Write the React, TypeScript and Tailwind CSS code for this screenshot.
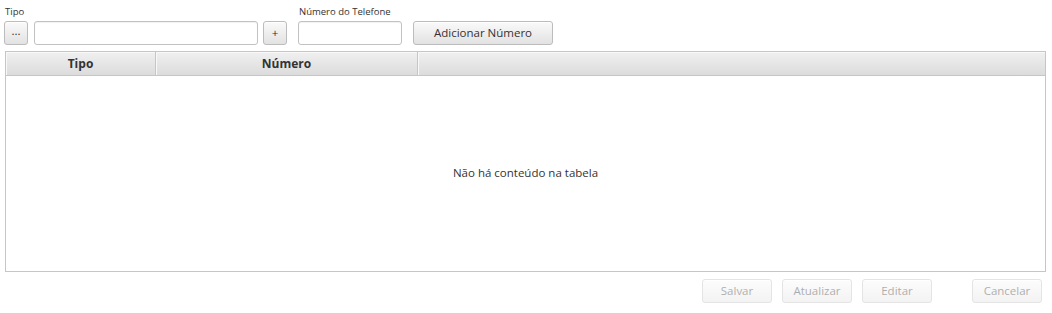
const font = { fontFamily: '"Open Sans", "Noto Sans", sans-serif' };

function Btn({ label, className = "", disabled = false }: { label: string; className?: string; disabled?: boolean }) {
  return (
    <button
      className={`h-[24px] rounded-[3px] border border-[#bcbcbc] bg-gradient-to-b from-[#fafafa] to-[#e2e2e2] text-[11.5px] text-[#333] leading-none shadow-[inset_0_1px_0_#fff] ${disabled ? "opacity-40" : ""} ${className}`}
    >
      {label}
    </button>
  );
}

function Field({ className = "" }: { className?: string }) {
  return <div className={`h-[24px] rounded-[3px] border border-[#c2c2c2] bg-white shadow-[inset_0_1px_1px_rgba(0,0,0,0.06)] ${className}`} />;
}

export default function App() {
  return (
    <div className="w-[1052px] h-[313px] bg-white text-[#333]" style={font}>
      {/* Form row */}
      <div className="flex items-end pl-[4px] pt-[5px]">
        <div className="flex flex-col">
          <span className="pl-[1px] text-[9.5px] leading-[13px] h-[16px]">Tipo</span>
          <div className="flex">
            <Btn label="..." className="w-[24px] pb-[4px]" />
            <Field className="ml-[6px] w-[224px]" />
            <Btn label="+" className="ml-[5px] w-[24px]" />
          </div>
        </div>
        <div className="ml-[11px] flex flex-col">
          <span className="pl-[1px] text-[9.5px] leading-[13px] h-[16px]">Número do Telefone</span>
          <Field className="w-[104px]" />
        </div>
        <Btn label="Adicionar Número" className="ml-[11px] w-[140px]" />
      </div>

      {/* Table */}
      <div className="ml-[5px] mt-[6px] w-[1041px] h-[221px] border border-[#c6c6c6] flex flex-col">
        <div className="flex h-[24px] border-b border-[#c6c6c6] bg-gradient-to-b from-[#f0f0f0] to-[#dcdcdc] text-[12px] font-bold">
          <div className="w-[150px] flex items-center justify-center border-r border-[#c6c6c6] shadow-[inset_1px_1px_0_#f8f8f8]">Tipo</div>
          <div className="w-[262px] flex items-center justify-center border-r border-[#c6c6c6] shadow-[inset_1px_1px_0_#f8f8f8]">Número</div>
          <div className="flex-1 shadow-[inset_1px_1px_0_#f8f8f8]" />
        </div>
        <div className="flex-1 flex items-center justify-center text-[11.5px] pb-[2px]">Não há conteúdo na tabela</div>
      </div>

      {/* Action buttons */}
      <div className="flex justify-end pr-[10px] mt-[7px]">
        <Btn label="Salvar" disabled className="w-[70px]" />
        <Btn label="Atualizar" disabled className="ml-[10px] w-[70px]" />
        <Btn label="Editar" disabled className="ml-[10px] w-[70px]" />
        <Btn label="Cancelar" disabled className="ml-[40px] w-[70px]" />
      </div>
    </div>
  );
}
